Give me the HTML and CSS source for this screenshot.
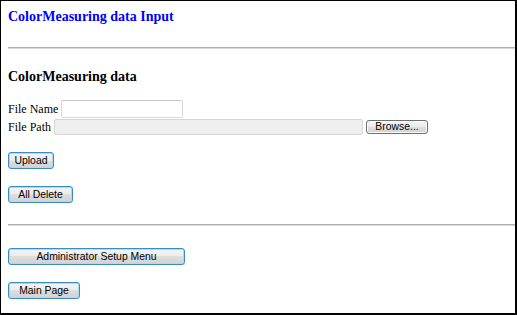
FILE: index.html
```html
<!DOCTYPE html>
<html lang="en">
<head>
    <meta charset="UTF-8">
    <meta name="viewport" content="width=device-width, initial-scale=1.0">
    <title>ColorMeasuring data Input</title>
    <link rel="stylesheet" href="styles.css">
</head>
<body>

    <div class="frame">
        <h1 class="title">ColorMeasuring data Input</h1>
        <hr class="rule">

        <!-- Upload form -->
        <h3 class="section-title">ColorMeasuring data</h3>
        <div class="form-row">
            <label>File Name</label>
            <input type="text" class="field field-name">
        </div>
        <div class="form-row form-row-path">
            <label>File Path</label>
            <input type="text" class="field field-path" disabled>
            <button type="button" class="btn btn-browse">Browse...</button>
        </div>

        <div class="btn-row btn-row-first">
            <button type="button" class="btn btn-upload">Upload</button>
        </div>
        <div class="btn-row">
            <button type="button" class="btn btn-delete">All Delete</button>
        </div>

        <hr class="rule rule-bottom">

        <!-- Navigation -->
        <div class="btn-row btn-row-admin">
            <button type="button" class="btn btn-admin">Administrator Setup Menu</button>
        </div>
        <div class="btn-row">
            <button type="button" class="btn btn-main">Main Page</button>
        </div>
    </div>

</body>
</html>
```

FILE: styles.css
```css
html, body {
    margin: 0;
    padding: 0;
    background: #fff;
}

.frame {
    width: 517px;
    height: 315px;
    box-sizing: border-box;
    border: 1px solid #000;
    border-right-width: 2px;
    border-bottom-width: 2px;
    padding: 8px 0 0 7px;
    font-family: "Liberation Serif", "Times New Roman", serif;
    color: #000;
}

.title {
    margin: 0;
    font-size: 14px;
    line-height: 16px;
    font-weight: bold;
    color: #0000ff;
}

.rule {
    margin: 22px 0 0;
    height: 0;
    border: 0;
    border-top: 1px solid #b0b0b0;
    border-bottom: 1px solid #d8d8d8;
}

.rule-bottom {
    margin-top: 21px;
}

.section-title {
    margin: 20px 0 0;
    font-size: 14px;
    line-height: 16px;
    font-weight: bold;
}

/* File rows */
.form-row {
    display: flex;
    align-items: center;
    gap: 3px;
    margin-top: 15px;
    font-size: 12px;
    line-height: 14px;
}

.form-row-path {
    margin-top: 1px;
}

.field {
    box-sizing: border-box;
    margin: 0;
    padding: 0 2px;
    border: 1px solid #dadada;
    border-top-color: #c6c6c6;
    border-radius: 2px;
    background: #fff;
    font: 12px "Liberation Sans", Arial, sans-serif;
}

.field-name {
    width: 122px;
    height: 18px;
}

.field-path {
    width: 309px;
    height: 16px;
    background: #efefef;
    border-color: #d6d6d6;
}

/* Buttons */
.btn {
    display: block;
    box-sizing: border-box;
    height: 17px;
    margin: 0;
    padding: 0;
    border: 1px solid #3a8cc6;
    border-radius: 3px;
    background: linear-gradient(#f4f4f4 0%, #ececec 50%, #dedede 50%, #d2d2d2 100%);
    box-shadow: inset 0 0 0 1px #a9dbf4;
    font: 10.4px "Liberation Sans", Arial, sans-serif;
    line-height: 14px;
    color: #000;
    text-align: center;
    cursor: pointer;
}

.btn-browse {
    width: 62px;
    height: 14px;
    line-height: 12px;
    border-color: #707070;
    box-shadow: inset 0 0 0 1px #fbfbfb;
}

.btn-row {
    margin-top: 17px;
}

.btn-row-admin {
    margin-top: 22px;
}

.btn-upload {
    width: 46px;
}

.btn-delete {
    width: 65px;
}

.btn-admin {
    width: 177px;
}

.btn-main {
    width: 72px;
}
```
